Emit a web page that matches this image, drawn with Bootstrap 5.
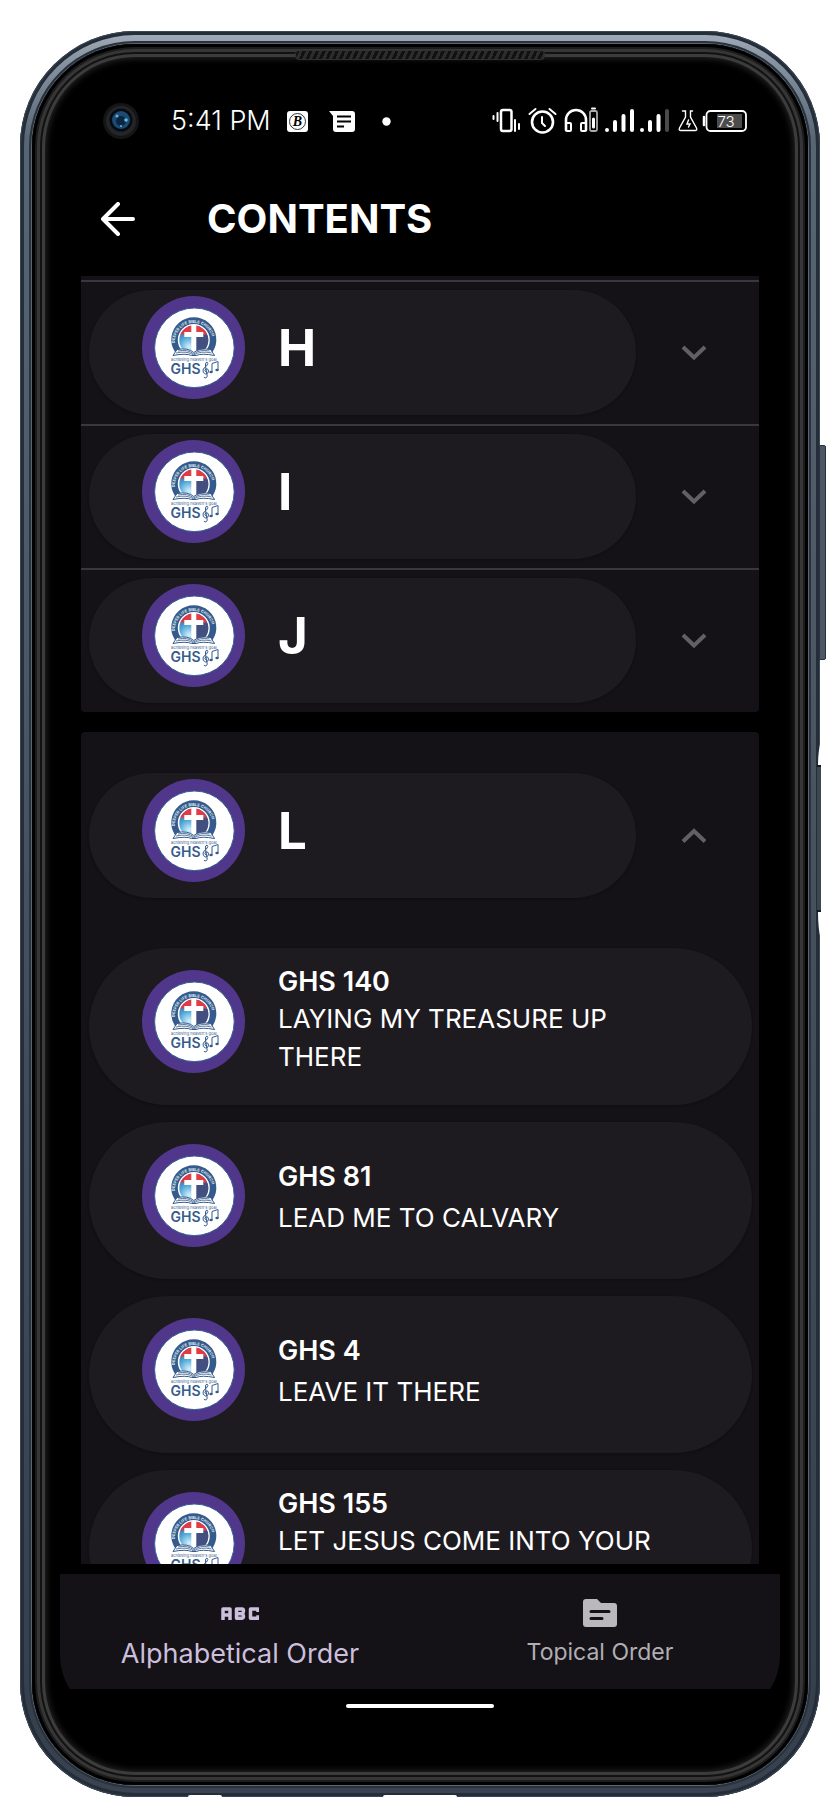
<!DOCTYPE html>
<html lang="en">
<head>
<meta charset="utf-8">
<meta name="viewport" content="width=device-width, initial-scale=1">
<title>Contents</title>
<link rel="stylesheet" href="https://cdn.jsdelivr.net/npm/bootstrap@5.3.0/dist/css/bootstrap.min.css">
<script src="https://cdn.jsdelivr.net/npm/bootstrap@5.3.0/dist/js/bootstrap.bundle.min.js" defer></script>
<style>
  :root { --surface: #141117; --pill: #1e1b20; --line: #3b373f; }
  body { background: #fff; color: #fff; font-family: Inter, "Open Sans", sans-serif; }
  .stage { height: 100vh; padding: 31px 20px 3px; }
  .device { border-radius: 115px; padding: 13px 12px 12px;
    background: linear-gradient(#a3adb9 0, #8793a0 30px, #586572 110px, #414c58 60%, #35404c 95%, #3a434f 100%);
    box-shadow: inset 0 0 0 1px #3c4651, inset 0 0 0 4px #232e3a; }
  .bezel { background: #000; border-radius: 103px; padding: 36px 28px 66px;
    box-shadow: 0 0 0 1px #5b6570, 0 0 0 3px #28333f,
      inset 0 0 0 3px #000, inset 0 0 0 5px #1c1c1c, inset 0 0 0 8px #363636,
      inset 0 0 0 10px #121212, inset 0 0 0 13px #3c3c3c, inset 0 0 7px 14px #2a2a2a; }
  .screen { border-radius: 64px; overflow: hidden; }
  .speaker { top: 19px; left: 50%; width: 250px; height: 10px; transform: translateX(-50%); border-radius: 4px;
    border: 1px solid #303030; background: repeating-linear-gradient(115deg, #111 0 3px, #2c2c2c 3px 6px); }
  .power { top: 414px; right: -6px; width: 7px; height: 215px; border-radius: 0 2px 2px 0;
    background: #4c5763; border: 1px solid #273240; }
  .volume { top: 709px; right: -1px; }
  .port { bottom: 0; height: 2px; background: #fff; border-radius: 4px 4px 0 0; }
  .status-row { height: 82px; padding: 0 33px 0 43px; }
  .clock { font-size: 27px; line-height: 32px; font-weight: 300; margin-left: 32px; }
  .camera { width: 36px; height: 36px; }
  .title-row { height: 114px; padding: 0 36px 0 33px; }
  .title-row h1 { font-size: 40px; line-height: 48px; font-weight: 700; margin: 0 0 0 72px; }
  .plain-btn { background: none; border: 0; padding: 0; color: inherit; text-align: left; display: flex; }
  .catalog { overflow: hidden; margin: 0 21px; }
  .group { background: var(--surface); }
  .group-first { border-radius: 0 0 4px 4px; padding-top: 4px; margin-bottom: 20px; }
  .group-open { border-radius: 4px 4px 0 0; padding-top: 31px; }
  .letter-row { height: 144px; padding: 8px 52px 9px 8px; border-top: 2px solid transparent; }
  .group-first .letter-row { border-color: var(--line); }
  .pill { background: var(--pill); box-shadow: 0 1px 2px #100d13; padding-left: 53px; color: #fff; text-decoration: none; }
  .letter-pill { border-radius: 63px; height: 125px; width: 547px; padding-top: 6px; }
  .letter-pill span { font-size: 51px; line-height: 103px; font-weight: 700; }
  .songs { padding: 41px 7px 0 8px; display: flex; flex-direction: column; gap: 17px; margin: 0; list-style: none; }
  .song { border-radius: 79px; min-height: 157px; padding-top: 16px; padding-right: 80px; }
  .song .emblem { margin-top: 6px; }
  .song strong { display: block; font-size: 27px; line-height: 36px; font-weight: 600; }
  .song em { display: block; font-style: normal; font-size: 26px; line-height: 38px; }
  .song-short .words { padding-top: 21px; }
  .song-short strong { margin-bottom: 4px; }
  .emblem { width: 103px; height: 103px; flex: none; margin-right: 33px; }
  .tabs { background: var(--surface); margin-top: 10px; height: 115px; }
  .tabs a { color: #b1aeb4; text-decoration: none; font-size: 23px; line-height: 32px; padding-top: 21px; }
  .tabs a.active { color: #cbbfdc; font-size: 27px; line-height: 36px; }
  .tabs svg { margin-bottom: 5px; }
  .home-zone { height: 32px; }
  .home-bar { width: 148px; height: 4px; border-radius: 2px; background: #fff; margin-top: 4px; }
</style>
</head>
<body>
<svg width="0" height="0" class="position-absolute" aria-hidden="true">
  <defs>
    <radialGradient id="globe" cx=".35" cy=".72" r=".65"><stop offset="0" stop-color="#d9f1fb"/><stop offset=".5" stop-color="#4aa5d8"/><stop offset="1" stop-color="#45527f"/></radialGradient>
    <clipPath id="disc"><circle cx="51.800" cy="44" r="14.500"/></clipPath>
    <path id="arc" d="M33.800 52 A19 19 0 1 1 69.800 52"/>
    <symbol id="emblem" viewBox="0 0 103 103">
      <circle cx="51.500" cy="51.500" r="51.500" fill="#50378b"/>
      <circle cx="52.400" cy="51.800" r="39.800" fill="#fff" stroke="#356294" stroke-width="1"/>
      <path d="M33 56A22.500 22.500 0 1 1 70.600 56z" fill="#355b8c"/>
      <circle cx="51.800" cy="44" r="16" fill="#fff"/>
      <g clip-path="url(#disc)"><rect x="36" y="28" width="32" height="32" fill="url(#globe)"/><rect x="53" y="39" width="15" height="22" fill="#43507f"/><rect x="36" y="28" width="32" height="10.500" fill="#e33b46"/></g>
      <path d="M49.300 29h5v7h7v5h-7v16h-5V41h-7v-5h7z" fill="#fff"/>
      <text font-family="Inter, sans-serif" font-size="4" font-weight="700" fill="#dfe8f2"><textPath href="#arc" startOffset="5">DEEPER LIFE BIBLE CHURCH</textPath></text>
      <path d="M31 59.500l4-6q11-2 16.800 3 5.800-5 16.800-3l4 6q-13-2.500-18.500 0h-4.600q-5.500-2.500-18.500 0z" fill="#fff" stroke="#355b8c" stroke-width="1"/>
      <path d="M34 57q11-2.500 17.800 2 6.800-4.500 17.800-2M36 55q10-2 15.800 3 5.800-5 15.800-3" fill="none" stroke="#355b8c" stroke-width=".8"/>
      <text x="29" y="65" font-family="Inter, sans-serif" font-size="4" fill="#355b8c">achieving heaven's goal</text>
      <text x="28.500" y="77.500" font-family="Inter, sans-serif" font-size="14" font-weight="600" fill="#355b8c">GHS</text>
      <g fill="none" stroke="#355b8c" stroke-width="1" stroke-linecap="round"><path d="M64 76q-2-1-.5-3 3-1 3 2 0 3-3 3-3-1-2.500-4 .5-2 3.500-4 2.500-3 .5-4-2 0-1.500 4l1.700 10q-.5 3-3 1.500M70 76v-8.500l6-2V74"/></g>
      <ellipse cx="69" cy="76" rx="1.700" ry="1.300" fill="#355b8c"/><ellipse cx="75" cy="74" rx="1.700" ry="1.300" fill="#355b8c"/>
    </symbol>
    <symbol id="down" viewBox="0 0 26 16"><path d="M2 2l11 10.500L24 2" fill="none" stroke="#625f66" stroke-width="4"/></symbol>
    <symbol id="up" viewBox="0 0 26 16"><path d="M2 13.500L13 3l11 10.500" fill="none" stroke="#625f66" stroke-width="4"/></symbol>
  </defs>
</svg>

<div class="stage">
  <div class="device position-relative h-100">
    <span class="power position-absolute"></span>
    <svg class="volume position-absolute" width="5" height="200" viewBox="0 0 5 200"><path d="M5 0q-3 11-3 25h3zM2 172h3v28q-3-11-3-28z" fill="#fff"/><path d="M1 25h4v147H1z" fill="#3c4650"/><path d="M1 25h4v2H1zM1 170h4v2H1z" fill="#101a26"/></svg>
    <span class="speaker position-absolute"></span>
    <div class="bezel h-100">
      <div class="screen h-100 d-flex flex-column">
        <header>
          <div class="status-row d-flex align-items-center">
            <svg class="camera" viewBox="0 0 36 36"><circle cx="18" cy="18" r="18" fill="#151515"/><circle cx="18" cy="18" r="15" fill="#232528"/><circle cx="18" cy="17" r="11.500" fill="#070c14"/><circle cx="18" cy="17" r="9" fill="#1c4a70"/><circle cx="18" cy="18" r="5" fill="#0c263f"/><g fill="#5fb7e6"><circle cx="14" cy="13" r="1.500"/><circle cx="23" cy="17" r="1.800"/><circle cx="18" cy="23" r="1"/></g></svg>
            <span class="clock">5:41 PM</span>
            <svg class="ms-3" width="21" height="21" viewBox="0 0 21 21"><rect width="21" height="21" rx="3" fill="#fff"/><circle cx="10.500" cy="10.500" r="8" fill="none" stroke="#333"/><text x="10.500" y="15" text-anchor="middle" font-family="Liberation Serif, serif" font-style="italic" font-weight="700" font-size="14">B</text></svg>
            <svg style="margin-left:21px" width="26" height="21" viewBox="0 0 26 21"><path d="M0 0h23q3 0 3 3v15q0 3-3 3H7q-3 0-3-3V5z" fill="#fff"/><path d="M8 5.500h14M8 10.500h14M8 15.500h7" stroke="#000" stroke-width="2"/></svg>
            <svg style="margin-left:27px" width="9" height="9" viewBox="0 0 9 9"><circle cx="4.500" cy="4.500" r="4.200" fill="#fff"/></svg>
            <svg class="ms-auto" width="256" height="28" viewBox="0 0 256 28" fill="none" stroke="#fff" stroke-width="2" stroke-linecap="round">
              <rect x="10" y="3" width="10.500" height="21" rx="2" stroke-width="2.500"/><path d="M2.500 9v3M6.500 6v8M24 13v11M28 17v5"/>
              <circle cx="51.500" cy="15" r="10.500" stroke-width="2.600"/><path d="M51 10v6l3 3M38.500 7l6-5M58.500 2l6 5"/>
              <path d="M75 23V13a9.500 9.500 0 0 1 20 0v10" stroke-width="2.600"/><rect x="75" y="16" width="5" height="8" rx="1"/><rect x="90" y="16" width="5" height="8" rx="1"/>
              <rect x="99" y="4" width="7" height="20" rx="1.500" stroke="#aaa" stroke-width="1.800"/><path d="M101 1.500h3"/><path d="M102.500 12v8" stroke-width="3"/>
              <g stroke-width="4"><path d="M116 23v.1M124 15v8M132.500 9v14M141 4v19M151 23v.1M159 15v8M167.500 9v14"/><path d="M176 4v19" stroke="#4a4a4a"/></g>
              <path d="M191.500 4h3v6l-6 11q-1 2.500 1.500 2.500h14q2.500 0 1.500-2.500l-6-11V4h2M197.500 13l-1.500 4h3l-1.500 3" stroke-width="1.400"/>
              <path d="M213 10v8" stroke-width="2.500"/><rect x="226" y="7" width="25" height="14" fill="#4c4c4c" stroke="none"/><rect x="215.500" y="4" width="39.500" height="20" rx="4" stroke-width="1.800"/>
              <text x="235" y="19.500" text-anchor="middle" fill="#fff" stroke="none" font-size="15" font-weight="300">73</text>
            </svg>
          </div>
          <div class="title-row d-flex align-items-center">
            <button class="plain-btn ms-2" type="button" aria-label="Back"><svg width="34" height="34" viewBox="0 0 34 34" fill="none" stroke="#fff" stroke-width="4" stroke-linecap="round" stroke-linejoin="round"><path d="M17 2L2 17l15 15M2 17h30"/></svg></button>
            <h1>CONTENTS</h1>
          </div>
        </header>

        <main class="catalog flex-fill">
          <section class="group group-first">
            <button class="plain-btn letter-row w-100 align-items-center justify-content-between" type="button"><span class="pill letter-pill d-flex"><svg class="emblem"><use href="#emblem"/></svg><span>H</span></span><svg width="26" height="16"><use href="#down"/></svg></button>
            <button class="plain-btn letter-row w-100 align-items-center justify-content-between" type="button"><span class="pill letter-pill d-flex"><svg class="emblem"><use href="#emblem"/></svg><span>I</span></span><svg width="26" height="16"><use href="#down"/></svg></button>
            <button class="plain-btn letter-row w-100 align-items-center justify-content-between" type="button"><span class="pill letter-pill d-flex"><svg class="emblem"><use href="#emblem"/></svg><span>J</span></span><svg width="26" height="16"><use href="#down"/></svg></button>
          </section>
          <section class="group group-open">
            <button class="plain-btn letter-row w-100 align-items-center justify-content-between" type="button" aria-expanded="true"><span class="pill letter-pill d-flex"><svg class="emblem"><use href="#emblem"/></svg><span>L</span></span><svg width="26" height="16"><use href="#up"/></svg></button>
            <ul class="songs">
              <li><a href="#" class="pill song d-flex align-items-start"><svg class="emblem"><use href="#emblem"/></svg><span class="words"><strong>GHS 140</strong><em>LAYING MY TREASURE UP THERE</em></span></a></li>
              <li><a href="#" class="pill song song-short d-flex align-items-start"><svg class="emblem"><use href="#emblem"/></svg><span class="words"><strong>GHS 81</strong><em>LEAD ME TO CALVARY</em></span></a></li>
              <li><a href="#" class="pill song song-short d-flex align-items-start"><svg class="emblem"><use href="#emblem"/></svg><span class="words"><strong>GHS 4</strong><em>LEAVE IT THERE</em></span></a></li>
              <li><a href="#" class="pill song d-flex align-items-start"><svg class="emblem"><use href="#emblem"/></svg><span class="words"><strong>GHS 155</strong><em>LET JESUS COME INTO YOUR</em></span></a></li>
            </ul>
          </section>
        </main>

        <nav class="tabs d-flex flex-shrink-0">
          <a href="#" class="active flex-fill w-50 d-flex flex-column align-items-center"><svg width="38" height="36" viewBox="0 0 38 36" fill="none" stroke="#cbbfdc" stroke-width="3.500" stroke-linejoin="round"><path d="M2 25V14h7v11M2 20h7M15.500 14h5.500q1.500 0 1.500 2t-1.500 2.700q1.500.8 1.500 2.600t-1.500 2h-5.500zM15.500 18.700h5M37 17v-3h-7.500v9.300H37v-3"/></svg>Alphabetical Order</a>
          <a href="#" class="flex-fill w-50 d-flex flex-column align-items-center"><svg width="36" height="36" viewBox="0 0 36 36"><path d="M4 4h11l4 4h13q3 0 3 3v18q0 3-3 3H4q-3 0-3-3V7q0-3 3-3z" fill="#bab8bc"/><path d="M9 16.500h18M9 23.500h11" stroke="#141117" stroke-width="3" stroke-linecap="round"/></svg>Topical Order</a>
        </nav>
        <div class="home-zone d-flex justify-content-center align-items-center"><span class="home-bar"></span></div>
      </div>
    </div>
    <span class="port position-absolute" style="left:21%;width:34px"></span>
    <span class="port position-absolute" style="left:45.400%;width:74px"></span>
  </div>
</div>
</body>
</html>
